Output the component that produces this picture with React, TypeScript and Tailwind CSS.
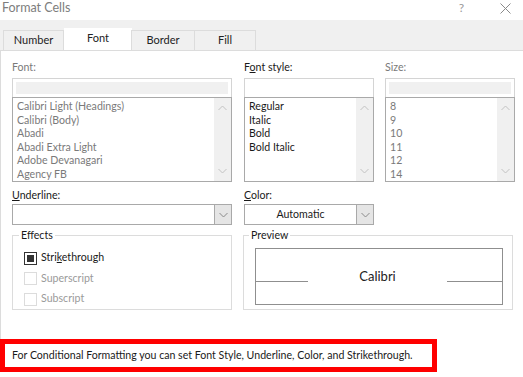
import React from "react"

const fontList = ["Calibri Light (Headings)", "Calibri (Body)", "Abadi", "Abadi Extra Light", "Adobe Devanagari", "Agency FB"]
const styleList = ["Regular", "Italic", "Bold", "Bold Italic"]
const sizeList = ["8", "9", "10", "11", "12", "14"]

const tabs = [
  { label: "Number", w: "w-[61px]" },
  { label: "Font", w: "w-[68px]", active: true },
  { label: "Border", w: "w-[64px]" },
  { label: "Fill", w: "w-[62px]" },
]

function Chevron({ up, className = "" }: { up?: boolean; className?: string }) {
  return (
    <svg width="9" height="6" viewBox="0 0 9 6" className={className}>
      <path d={up ? "M0.5 5 L4.5 1 L8.5 5" : "M0.5 1 L4.5 5 L8.5 1"} fill="none" stroke="currentColor" strokeWidth="1" />
    </svg>
  )
}

function ListBox({ items, muted, inputFill }: { items: string[]; muted?: boolean; inputFill?: boolean }) {
  return (
    <div className="flex flex-col">
      <div className="h-[19px] border border-b-0 border-[#d4d4d4] p-[3px]">
        {inputFill && <div className="h-full bg-[#f0f0f0]" />}
      </div>
      <div className="flex h-[85px] border border-[#a9a9a9]">
        <ul className={`flex-1 pl-[4px] pt-[2px] leading-[13.6px] ${muted ? "text-[#7a7a7a]" : "text-[#1a1a1a]"}`}>
          {items.map((it) => (
            <li key={it}>{it}</li>
          ))}
        </ul>
        <div className="flex w-[17px] flex-col items-center justify-between bg-[#f0f0f0] py-[7px] text-[#c2c2c2]">
          <Chevron up />
          <Chevron />
        </div>
      </div>
    </div>
  )
}

function Dropdown({ value, className = "" }: { value?: string; className?: string }) {
  return (
    <div className={`flex h-[21px] border border-[#a9a9a9] ${className}`}>
      <div className="flex flex-1 items-center justify-center text-[#1a1a1a]">{value}</div>
      <div className="flex w-[17px] items-center justify-center border-l border-[#a9a9a9] bg-[#e5e5e5] text-[#8a8a8a]">
        <Chevron />
      </div>
    </div>
  )
}

function Check({ label, checked, disabled }: { label: React.ReactNode; checked?: boolean; disabled?: boolean }) {
  return (
    <div className={`flex h-[20.5px] items-center gap-[4px] ${disabled ? "text-[#9a9a9a]" : "text-[#1a1a1a]"}`}>
      <span className={`flex size-[13px] items-center justify-center border ${disabled ? "border-[#dcdcdc]" : "border-[#333]"}`}>
        {checked && <span className="size-[7px] bg-[#333]" />}
      </span>
      <span>{label}</span>
    </div>
  )
}

export default function App() {
  return (
    <div className="h-[377px] w-[523px] overflow-hidden bg-white font-['Segoe_UI','Lato',sans-serif] text-[10.6px] text-[#1a1a1a]">
      {/* title bar */}
      <div className="flex h-[20px] items-start justify-between pl-[2px] pr-[12px] text-[12.5px] text-[#7d7d7d]">
        <span className="leading-[16px]">Format Cells</span>
        <div className="flex items-start gap-[36px] pt-[1px]">
          <span className="text-[12px] leading-[14px] text-[#9a9a9a]">?</span>
          <svg width="11" height="11" viewBox="0 0 11 11" className="mt-[2px] text-[#8a8a8a]">
            <path d="M0.5 0.5 L10.5 10.5 M10.5 0.5 L0.5 10.5" stroke="currentColor" strokeWidth="1" />
          </svg>
        </div>
      </div>

      {/* tab strip */}
      <div className="flex h-[30px] items-end bg-[#f0f0f0] pl-[3px]">
        {tabs.map((t) =>
          t.active ? (
            <div key={t.label} className={`${t.w} flex h-[22px] items-center justify-center bg-white pb-[2px] text-[11px] text-[#222]`}>
              {t.label}
            </div>
          ) : (
            <div key={t.label} className={`${t.w} -ml-px flex h-[20px] items-center justify-center border border-b-0 border-[#dcdcdc] text-[11px] text-[#222] first:ml-0`}>
              {t.label}
            </div>
          )
        )}
      </div>

      {/* panel */}
      <div className="h-[289px] border-l border-t border-[#dcdcdc] pl-[11px] pr-[9px] pt-[9px]">
        <div className="grid grid-cols-[220px_130px_129px] gap-x-[12px]">
          <div>
            <div className="h-[18px] text-[#7a7a7a]">Font:</div>
            <ListBox items={fontList} muted inputFill />
          </div>
          <div>
            <div className="h-[18px]">
              F<span className="underline">o</span>nt style:
            </div>
            <ListBox items={styleList} />
          </div>
          <div className="-ml-px">
            <div className="h-[18px] text-[#7a7a7a]">Size:</div>
            <ListBox items={sizeList} muted inputFill />
          </div>

          <div className="mt-[6px]">
            <div className="h-[16px]">
              <span className="underline">U</span>nderline:
            </div>
            <Dropdown />
          </div>
          <div className="mt-[6px]">
            <div className="h-[16px]">
              <span className="underline">C</span>olor:
            </div>
            <Dropdown value="Automatic" className="w-[130px]" />
          </div>
          <div />
        </div>

        <div className="mt-[3px] flex gap-[11px]">
          <fieldset className="h-[82px] w-[220px] border border-[#dcdcdc] pl-[11px]">
            <legend className="-ml-[5px] px-[2px] leading-[14px]">Effects</legend>
            <div className="pt-[6px]">
              <Check checked label={<>Stri<span className="underline">k</span>ethrough</>} />
              <Check disabled label="Superscript" />
              <Check disabled label="Subscript" />
            </div>
          </fieldset>
          <fieldset className="h-[82px] w-[270px] border border-[#dcdcdc] pl-[11px] pr-[9px]">
            <legend className="-ml-[6px] px-[2px] leading-[14px]">Preview</legend>
            <div className="mt-[6px] flex h-[57px] items-center border border-[#8f8f8f]">
              <div className="mt-[9px] h-px w-[52px] bg-[#8f8f8f]" />
              <div className="flex-1 text-center text-[13px] text-[#222]">Calibri</div>
              <div className="mt-[9px] h-px w-[55px] bg-[#8f8f8f]" />
            </div>
          </fieldset>
        </div>
      </div>

      {/* note */}
      <div className="flex h-[33px] w-[437px] items-center border-[5px] border-[#ff0000] bg-white pl-[7px] text-[#1a1a1a]">
        For Conditional Formatting you can set Font Style, Underline, Color, and Strikethrough.
      </div>
    </div>
  )
}
